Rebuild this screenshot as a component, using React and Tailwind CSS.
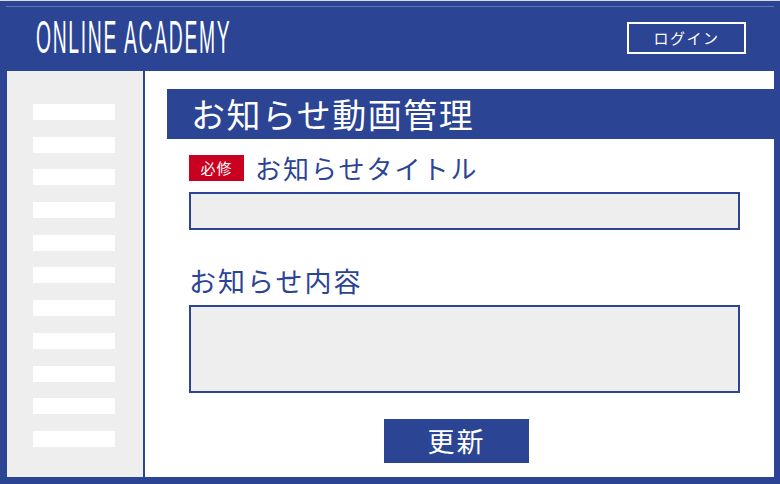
export default function App() {
  const bars = Array.from({ length: 11 });
  const jp = { fontFamily: '"Noto Sans CJK JP", "Noto Sans", sans-serif' };

  return (
    <div className="w-[780px] h-[484px] bg-[#2b4494] border-t border-[#d8dbe6] flex flex-col overflow-hidden" style={jp}>
      {/* header */}
      <div className="h-[70px] px-[6px] pt-[5px] shrink-0">
        <div className="h-full border-t border-[#5f73b8] flex items-start">
          <div className="ml-[30px] mt-[10px] w-[200px] h-[40px] overflow-visible">
            <span
              className="inline-block origin-left scale-x-[0.42] text-white text-[46px] leading-[40px] tracking-[4px] whitespace-nowrap"
              style={{ fontFamily: '"Liberation Sans", Arial, sans-serif' }}
            >
              ONLINE ACADEMY
            </span>
          </div>
          <button className="ml-auto mr-[28px] mt-[15px] w-[119px] h-[32px] border-2 border-white text-white text-[15px] tracking-[1.5px] flex items-center justify-center">
            ログイン
          </button>
        </div>
      </div>

      {/* body */}
      <div className="flex-1 flex ml-[7px] mr-[6px] mb-[7px] min-h-0">
        <aside className="w-[138px] shrink-0 bg-[#eeeeee] border-r-2 border-[#2b4494] pt-[33px] pl-[26px] flex flex-col gap-[16.7px]">
          {bars.map((_, i) => (
            <div key={i} className="w-[82px] h-[16px] bg-white" />
          ))}
        </aside>

        <main className="flex-1 bg-white pt-[18px]">
          <div className="ml-[22px] h-[50px] bg-[#2b4494] flex items-center pl-[24px]">
            <h1 className="text-white text-[34px] leading-none tracking-[1.5px]">お知らせ動画管理</h1>
          </div>

          <div className="ml-[44px] mr-[34px]">
            <div className="mt-[11px] h-[36px] flex items-center">
              <span className="w-[55px] h-[26px] bg-[#c9001f] text-white text-[15px] tracking-[1px] flex items-center justify-center">
                必修
              </span>
              <span className="ml-[11px] text-[#2b4494] text-[26px] leading-none tracking-[2px]">
                お知らせタイトル
              </span>
            </div>
            <div className="mt-[6px] h-[38px] border-2 border-[#2b4494] bg-[#eeeeee]" />

            <div className="mt-[32px] h-[36px] flex items-center">
              <span className="text-[#2b4494] text-[27px] leading-none tracking-[2px]">お知らせ内容</span>
            </div>
            <div className="mt-[7px] h-[88px] border-2 border-[#2b4494] bg-[#eeeeee]" />

            <button className="mt-[26px] ml-[195px] w-[145px] h-[44px] bg-[#2b4494] text-white text-[27px] tracking-[2px] flex items-center justify-center">
              更新
            </button>
          </div>
        </main>
      </div>
    </div>
  );
}
